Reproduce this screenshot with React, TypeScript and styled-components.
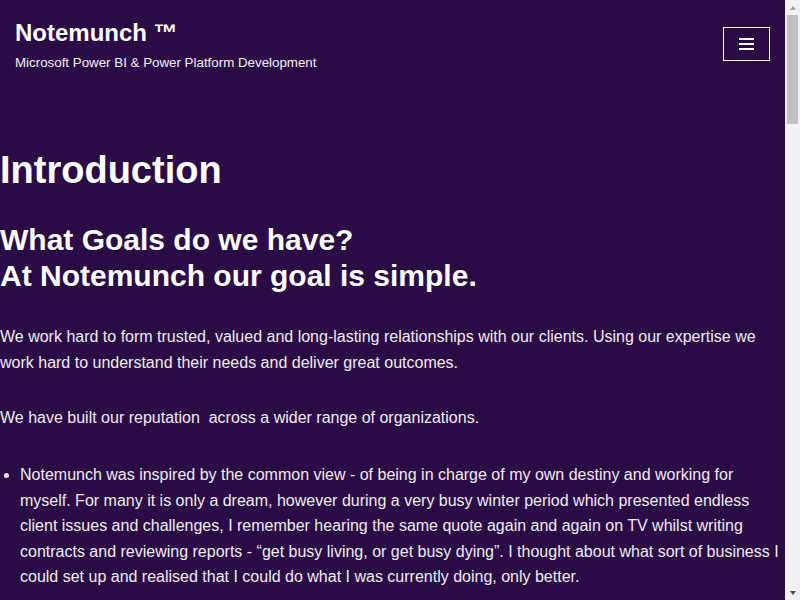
import styled, { createGlobalStyle } from 'styled-components';

const GlobalStyle = createGlobalStyle`
  html, body {
    margin: 0;
    padding: 0;
    background-color: #2a0b46;
  }
  body {
    font-family: "Liberation Sans", Arial, sans-serif;
    color: #f1ecf4;
  }
`;

const Viewport = styled.div`
  display: flex;
  height: 100vh;
  overflow: hidden;
`;

const Page = styled.div`
  flex: 1;
  min-width: 0;
  overflow-y: auto;
  scrollbar-width: none;
  &::-webkit-scrollbar {
    display: none;
  }
`;

const ScrollBar = styled.div`
  width: 15px;
  flex-shrink: 0;
  display: flex;
  flex-direction: column;
  background: #f1f1f1;
`;

const ScrollButton = styled.div<{ $dir: 'up' | 'down' }>`
  height: 15px;
  flex-shrink: 0;
  display: flex;
  align-items: center;
  justify-content: center;
  &::before {
    content: '';
    width: 0;
    height: 0;
    border-left: 3.5px solid transparent;
    border-right: 3.5px solid transparent;
    ${(p) =>
      p.$dir === 'up'
        ? 'border-bottom: 4px solid #a3a3a3;'
        : 'border-top: 4px solid #505050;'}
  }
`;

const ScrollTrack = styled.div`
  flex: 1;
  padding: 0 2px;
`;

const ScrollThumb = styled.div`
  height: 109px;
  background: #c1c1c1;
`;

const Header = styled.header`
  display: flex;
  justify-content: space-between;
  align-items: flex-start;
  padding: 15px 15px 0 15px;
`;

const Branding = styled.div`
  display: flex;
  flex-direction: column;
`;

const SiteTitle = styled.h1`
  margin: 0;
  font-size: 24px;
  font-weight: bold;
  line-height: 36px;
  color: #ffffff;
`;

const SiteTagline = styled.p`
  margin: 3px 0 0;
  font-size: 13.33px;
  line-height: 18px;
  color: #f4f0f7;
`;

const MenuToggle = styled.button`
  margin-top: 12px;
  width: 47px;
  height: 34px;
  border: 1px solid #ffffff;
  background: transparent;
  display: flex;
  flex-direction: column;
  align-items: center;
  justify-content: center;
  gap: 3px;
  padding: 0;
  cursor: pointer;
`;

const MenuBar = styled.span`
  display: block;
  width: 15px;
  height: 2px;
  background: #ffffff;
`;

const Main = styled.main`
  padding-top: 76px;
  padding-bottom: 120px;
`;

const PageTitle = styled.h1`
  margin: 0 0 30px;
  font-size: 38px;
  font-weight: bold;
  line-height: 44px;
  color: #ffffff;
`;

const SectionTitle = styled.h2`
  margin: 0 0 30px;
  font-size: 30px;
  font-weight: bold;
  line-height: 36px;
  color: #ffffff;
`;

const Paragraph = styled.p`
  margin: 0 0 29px;
  font-size: 16px;
  line-height: 26px;
`;

const List = styled.ul`
  margin: 31px 0 29px;
  padding-left: 20px;
`;

const ListItem = styled.li`
  font-size: 16px;
  line-height: 25.6px;
  margin-bottom: 12px;
`;

const App = () => {
  return (
    <>
      <GlobalStyle />
      <Viewport>
        <Page>
          <Header>
            <Branding>
              <SiteTitle>Notemunch ™</SiteTitle>
              <SiteTagline>Microsoft Power BI &amp; Power Platform Development</SiteTagline>
            </Branding>
            <MenuToggle aria-label="Menu">
              <MenuBar />
              <MenuBar />
              <MenuBar />
            </MenuToggle>
          </Header>
          <Main>
            <PageTitle>Introduction</PageTitle>
            <SectionTitle>
              What Goals do we have?
              <br />
              At Notemunch our goal is simple.
            </SectionTitle>
            <Paragraph>
              We work hard to form trusted, valued and long-lasting relationships with our clients. Using our expertise
              we work hard to understand their needs and deliver great outcomes.
            </Paragraph>
            <Paragraph>We have built our reputation&nbsp; across a wider range of organizations.</Paragraph>
            <List>
              <ListItem>
                Notemunch was inspired by the common view - of being in charge of my own destiny and working for
                myself. For many it is only a dream, however during a very busy winter period which presented endless
                client issues and challenges, I remember hearing the same quote again and again on TV whilst writing
                contracts and reviewing reports - “get busy living, or get busy dying”. I thought about what sort of
                business I could set up and realised that I could do what I was currently doing, only better.
              </ListItem>
              <ListItem>
                With years of experience delivering reporting and automation solutions, we focus on Power BI, Power
                Apps and Power Automate to help teams turn their data into decisions.
              </ListItem>
              <ListItem>
                Every project starts by listening. We take the time to learn how your business works before we design,
                build and support the tools that make it work better.
              </ListItem>
            </List>
            <SectionTitle>What we do</SectionTitle>
            <Paragraph>
              Power BI dashboards and reports, data modelling, DAX, Power Query, Power Apps canvas and model-driven
              apps, Power Automate flows, Dataverse, SharePoint integration, training and ongoing support.
            </Paragraph>
            <Paragraph>
              Whether you are just starting out with Power BI or looking to extend an existing platform, we can help you
              get there faster and with confidence.
            </Paragraph>
            <SectionTitle>Get in touch</SectionTitle>
            <Paragraph>
              If you would like to find out more about how Notemunch can help, please get in touch. We would love to
              hear from you.
            </Paragraph>
          </Main>
        </Page>
        <ScrollBar aria-hidden="true">
          <ScrollButton $dir="up" />
          <ScrollTrack>
            <ScrollThumb />
          </ScrollTrack>
          <ScrollButton $dir="down" />
        </ScrollBar>
      </Viewport>
    </>
  );
};

export default App;
